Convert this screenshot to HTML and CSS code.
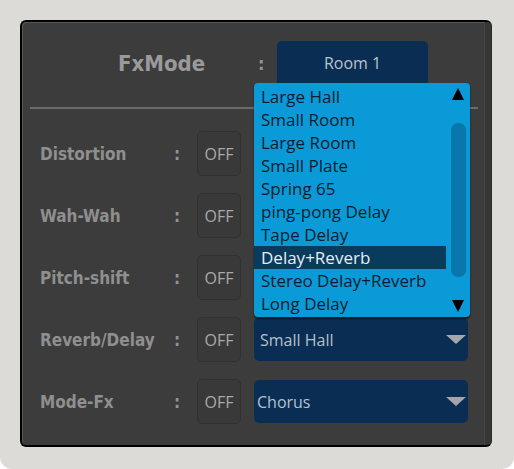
FILE: index.html
```html
<!DOCTYPE html>
<html>
<head>
<meta charset="utf-8">
<link rel="stylesheet" href="styles.css">
</head>
<body>
<div class="frame">
  <div class="panel">
    <div class="content">
      <div class="header">
        <div class="title">FxMode</div>
        <div class="colon hcolon">:</div>
        <div class="room">Room 1</div>
      </div>
      <div class="rule"></div>
      <div class="rows">
        <div class="row">
          <div class="label">Distortion</div>
          <div class="colon">:</div>
          <div class="off">OFF</div>
          <div class="select"><span></span><span class="caret"></span></div>
        </div>
        <div class="row">
          <div class="label">Wah-Wah</div>
          <div class="colon">:</div>
          <div class="off">OFF</div>
          <div class="select"><span></span><span class="caret"></span></div>
        </div>
        <div class="row">
          <div class="label">Pitch-shift</div>
          <div class="colon">:</div>
          <div class="off">OFF</div>
          <div class="select"><span></span><span class="caret"></span></div>
        </div>
        <div class="row">
          <div class="label">Reverb/Delay</div>
          <div class="colon">:</div>
          <div class="off">OFF</div>
          <div class="select"><span>Small Hall</span><span class="caret"></span></div>
        </div>
        <div class="row">
          <div class="label">Mode-Fx</div>
          <div class="colon">:</div>
          <div class="off">OFF</div>
          <div class="select chorus"><span>Chorus</span><span class="caret"></span></div>
        </div>
      </div>
    </div>
    <div class="strip"></div>
    <div class="dropdown">
      <ul class="items">
        <li>Large Hall</li>
        <li>Small Room</li>
        <li>Large Room</li>
        <li>Small Plate</li>
        <li>Spring 65</li>
        <li>ping-pong Delay</li>
        <li>Tape Delay</li>
        <li class="selected">Delay+Reverb</li>
        <li>Stereo Delay+Reverb</li>
        <li>Long Delay</li>
      </ul>
      <div class="scroll">
        <span class="arrow up"></span>
        <span class="thumb"></span>
        <span class="arrow down"></span>
      </div>
    </div>
  </div>
</div>
</body>
</html>
```

FILE: styles.css
```css
html, body {
  margin: 0;
  padding: 0;
  background: #ffffff;
}

.frame {
  width: 514px;
  height: 469px;
  box-sizing: border-box;
  padding: 20px 22px 22px 20px;
  background: #dcdbd7;
  border-radius: 0 0 12px 12px;
}

.panel {
  position: relative;
  height: 100%;
  box-sizing: border-box;
  display: grid;
  grid-template-columns: 1fr 7px;
  background: #3c3c3c;
  border-style: solid;
  border-color: #000;
  border-width: 2px 1px 2px 2px;
  border-right-color: #2a2a2a;
  border-radius: 6px;
  box-shadow: inset 1px 1px 0 #575757;
}

.strip {
  background: #363636;
  border-left: 1px solid #474747;
  border-radius: 0 5px 5px 0;
}

.content {
  padding-top: 19px;
}

.header {
  display: flex;
  align-items: center;
  height: 44px;
}

.title {
  width: 140px;
  padding-left: 96px;
  font-family: "DejaVu Sans Condensed", "DejaVu Sans", sans-serif;
  font-weight: bold;
  font-size: 22px;
  color: #9a9a9a;
}

.colon {
  font-family: "DejaVu Sans Condensed", "DejaVu Sans", sans-serif;
  font-weight: bold;
  font-size: 17px;
  color: #939393;
}

.row .colon {
  margin-left: -3px;
}

.hcolon {
  width: 19px;
  font-size: 18px;
}

.room {
  width: 151px;
  height: 44px;
  align-self: flex-start;
  display: flex;
  justify-content: center;
  align-items: center;
  background: #0a2e53;
  border-radius: 5px 5px 0 0;
  font-family: "Open Sans", sans-serif;
  font-size: 16px;
  color: #b9c3ce;
}

.rule {
  height: 2px;
  margin: 22px 6px 0 8px;
  background: #6a6a6a;
}

.rows {
  margin-top: 22px;
  padding-left: 18px;
  display: flex;
  flex-direction: column;
  gap: 17px;
}

.row {
  display: grid;
  grid-template-columns: 137px 20px 57px 214px;
  align-items: center;
  height: 45px;
}

.label {
  font-family: "DejaVu Sans Condensed", "DejaVu Sans", sans-serif;
  font-weight: bold;
  font-size: 17px;
  color: #8f8f8f;
}

.off {
  width: 44px;
  height: 45px;
  box-sizing: border-box;
  display: flex;
  align-items: center;
  justify-content: center;
  background: #393939;
  border: 1px solid #313131;
  border-radius: 5px;
  font-family: "Open Sans", sans-serif;
  font-size: 16px;
  color: #a9a9a9;
}

.select {
  height: 43px;
  box-sizing: border-box;
  display: flex;
  align-items: center;
  justify-content: space-between;
  padding: 0 2px 0 6px;
  background: #0a2e53;
  border-radius: 5px;
  font-family: "Open Sans", sans-serif;
  font-size: 16px;
  color: #b5c1cd;
}

.select.chorus {
  padding-left: 3px;
}

.caret {
  width: 0;
  height: 0;
  border-left: 10px solid transparent;
  border-right: 10px solid transparent;
  border-top: 9px solid #a3a6aa;
}

.dropdown {
  position: absolute;
  left: 232px;
  top: 61px;
  width: 216px;
  height: 234px;
  display: flex;
  background: #0a9ad8;
  border-radius: 4px;
  box-shadow: 0 2px 2px rgba(0, 0, 0, 0.55);
}

.items {
  list-style: none;
  margin: 0;
  padding: 2px 0 0 0;
  width: 192px;
}

.items li {
  height: 23px;
  line-height: 23px;
  padding-left: 7px;
  font-family: "Open Sans", sans-serif;
  font-size: 17px;
  color: #0b1c2c;
  white-space: nowrap;
}

.items li.selected {
  background: #083b5c;
  color: #e6eef6;
}

.scroll {
  flex: 1;
  display: flex;
  flex-direction: column;
  align-items: center;
  padding: 5px 0;
}

.arrow {
  width: 0;
  height: 0;
  border-left: 6.5px solid transparent;
  border-right: 6.5px solid transparent;
}

.arrow.up {
  border-bottom: 12px solid #000;
}

.arrow.down {
  border-top: 12px solid #000;
}

.thumb {
  width: 15px;
  height: 154px;
  margin: 23px 0;
  background: #0877ab;
  border-radius: 7px;
}
```
